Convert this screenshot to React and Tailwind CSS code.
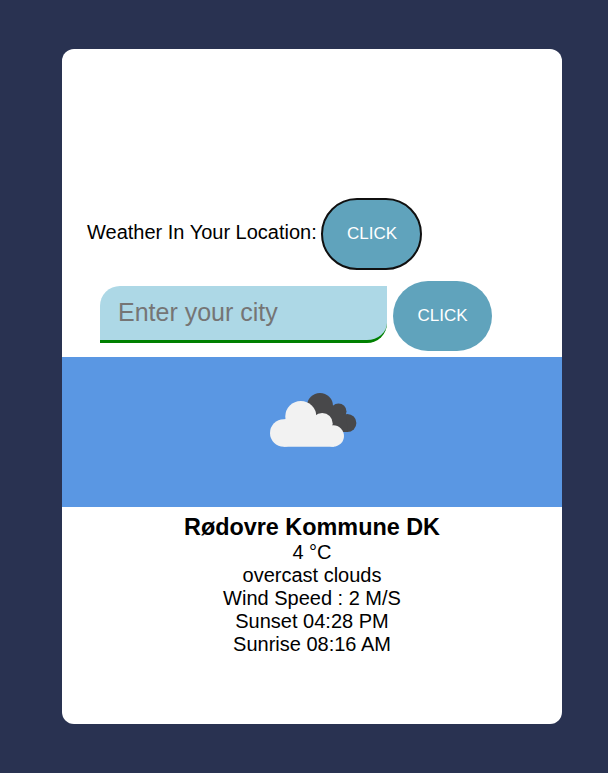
const details = ["4 °C", "overcast clouds", "Wind Speed : 2 M/S", "Sunset 04:28 PM", "Sunrise 08:16 AM"];

function CloudIcon() {
  return (
    <svg width="110" height="80" viewBox="0 0 110 80" aria-hidden="true">
      <g fill="#48484a">
        <circle cx="60" cy="26" r="13" />
        <circle cx="78.5" cy="31.5" r="8" />
        <circle cx="87.3" cy="43" r="9.1" />
        <path d="M52 36 70 24 86 36 88 52.1H76Z" />
      </g>
      <g fill="#f2f2f2">
        <circle cx="40.8" cy="36.5" r="15.5" />
        <circle cx="23.7" cy="53" r="13.7" />
        <circle cx="62.2" cy="43.5" r="10.5" />
        <circle cx="73.3" cy="56" r="10.7" />
        <path d="M23.7 66.7V40L41 30 66 44 74 66.7Z" />
      </g>
    </svg>
  );
}

export default function App() {
  return (
    <div className="flex h-[773px] w-[608px] items-start bg-[#293251] pt-[49px] pl-[62px] font-['Liberation_Sans',Arial,sans-serif] text-black">
      <main className="flex h-[675px] w-[500px] flex-col overflow-hidden rounded-xl bg-white pt-[149px]">
        <div className="flex h-[72px] items-center pl-[25px]">
          <span className="w-[234px] whitespace-nowrap pb-1 text-[20px] leading-[23px]">Weather In Your Location:</span>
          <button className="h-[72px] w-[101px] rounded-[36px] border-2 border-[#101010] bg-[#60a3bc] pl-px text-[17px] text-white">CLICK</button>
        </div>
        <div className="mt-[11px] flex h-[70px] items-start gap-[6px] pl-[38px]">
          <input
            className="mt-[5px] h-[57px] w-[287px] rounded-tl-[20px] rounded-br-[20px] border-b-[3px] border-[#008000] bg-[#add8e6] px-[18px] pb-[2px] text-[25px] outline-none placeholder:text-[#757575]"
            placeholder="Enter your city"
          />
          <button className="h-[70px] w-[99px] rounded-[35px] bg-[#60a3bc] text-[17px] text-white">CLICK</button>
        </div>
        <div className="mt-[6px] h-[150px] shrink-0 bg-[#5a97e3] pt-[23px] pl-[198px]">
          <CloudIcon />
        </div>
        <section className="pt-[6px] text-center text-[20px] leading-[23px]">
          <h1 className="text-[23.4px] leading-[28px] font-bold">Rødovre Kommune DK</h1>
          {details.map((line) => (
            <p key={line}>{line}</p>
          ))}
        </section>
      </main>
    </div>
  );
}
